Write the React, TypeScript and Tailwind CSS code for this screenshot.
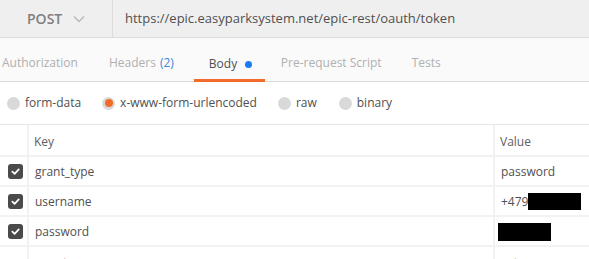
import React from 'react';

const font = { fontFamily: '"Open Sans", "Liberation Sans", sans-serif' };

const Check: React.FC = () => (
  <div className="w-[15px] h-[15px] rounded-[3px] bg-[#4a4a4a] flex items-center justify-center">
    <svg width="9" height="9" viewBox="0 0 10 10">
      <path d="M1.5 5.2 L4 7.6 L8.6 2.6" stroke="#fff" strokeWidth="1.9" fill="none" strokeLinecap="round" strokeLinejoin="round" />
    </svg>
  </div>
);

const Radio: React.FC<{ on?: boolean }> = ({ on }) => (
  <span className="w-[13px] h-[13px] rounded-full bg-[#d9d9d9] flex items-center justify-center shrink-0">
    {on && <span className="w-[8px] h-[8px] rounded-full bg-[#f26b2a]" />}
  </span>
);

const rows = [
  { key: 'grant_type', value: <span>password</span> },
  {
    key: 'username',
    value: (
      <span className="flex items-center">
        +479<span className="inline-block w-[53px] h-[17px] bg-black" />
      </span>
    ),
  },
  { key: 'password', value: <span className="inline-block w-[53px] h-[18px] bg-black -ml-[3px]" /> },
];

export default function App() {
  return (
    <div className="w-[589px] h-[259px] overflow-hidden bg-white text-[12px] text-[#505050]" style={font}>
      {/* URL bar */}
      <div className="h-[38px] bg-[#efefef] border-b border-[#dcdcdc] flex items-center">
        <div className="w-[113px] h-full flex items-center pl-[27px] border-r border-[#dcdcdc]">
          <span className="text-[14px] font-semibold text-[#808080]">POST</span>
          <svg className="ml-[11px]" width="12" height="8" viewBox="0 0 12 8">
            <path d="M1 1.5 L6 6.5 L11 1.5" stroke="#b8b8b8" strokeWidth="1.3" fill="none" />
          </svg>
        </div>
        <span className="pl-[12px] text-[13px] text-[#505050]">https://epic.easyparksystem.net/epic-rest/oauth/token</span>
      </div>

      {/* Tabs */}
      <div className="h-[44px] bg-[#fafafa] border-b border-[#dcdcdc] flex items-end text-[#b0b0b0]">
        <div className="pl-[2px] pr-[31px] h-full flex items-center pt-[7px]">Authorization</div>
        <div className="pr-[20px] h-full flex items-center pt-[7px]">
          Headers <span className="ml-[4px] text-[#3a87d9]">(2)</span>
        </div>
        <div className="w-[71px] h-full flex items-center pl-[15px] pt-[7px] border-b-[3px] border-[#f26b2a] text-[#505050] -mb-px">
          <span className="pt-[3px] flex items-center">
            Body<span className="ml-[8px] w-[7px] h-[7px] rounded-full bg-[#1a7bf0]" />
          </span>
        </div>
        <div className="pl-[16px] pr-[30px] h-full flex items-center pt-[7px]">Pre-request Script</div>
        <div className="h-full flex items-center pt-[7px]">Tests</div>
      </div>

      {/* Body types */}
      <div className="h-[43px] border-b border-[#e6e6e6] flex items-center pl-[7px]">
        <Radio />
        <span className="ml-[5px] mr-[21px]">form-data</span>
        <Radio on />
        <span className="ml-[5px] mr-[21px]">x-www-form-urlencoded</span>
        <Radio />
        <span className="ml-[5px] mr-[22px]">raw</span>
        <Radio />
        <span className="ml-[5px]">binary</span>
      </div>

      {/* Table */}
      <div className="flex flex-col">
        <div className="h-[32px] flex border-b-2 border-[#f2f2f2]">
          <div className="w-[29px] border-r-2 border-[#f2f2f2]" />
          <div className="w-[464px] flex items-center pl-[5px] pt-[3px] text-[#606060]">Key</div>
          <div className="flex-1 border-l-2 border-[#f2f2f2] flex items-center pl-[5px] pt-[3px] text-[#606060]">Value</div>
        </div>
        {rows.map((r) => (
          <div key={r.key} className="h-[30px] flex border-b-2 border-[#f2f2f2]">
            <div className="w-[29px] border-r-2 border-[#f2f2f2] flex items-center pl-[8px]">
              <Check />
            </div>
            <div className="w-[464px] flex items-center pl-[6px] pt-[2px]">{r.key}</div>
            <div className="flex-1 border-l-2 border-[#f2f2f2] flex items-center pl-[6px] pt-[1px]">{r.value}</div>
          </div>
        ))}
        <div className="h-[14px] flex overflow-hidden">
          <div className="w-[29px] border-r-2 border-[#f2f2f2]" />
          <div className="w-[464px] pl-[6px] pt-[9px] leading-[16px] text-[#c8c8c8]">New key</div>
          <div className="flex-1 border-l-2 border-[#f2f2f2] pl-[6px] pt-[9px] leading-[16px] text-[#c8c8c8]">value</div>
        </div>
      </div>
    </div>
  );
}
